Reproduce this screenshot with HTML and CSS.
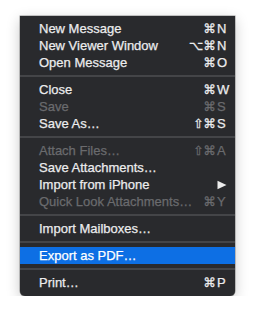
FILE: index.html
```html
<!DOCTYPE html>
<html>
<head>
<meta charset="utf-8">
<link rel="stylesheet" href="styles.css">
</head>
<body>
<div class="menu">
  <div class="item"><span class="label">New Message</span><span class="mods">⌘</span><span class="key">N</span></div>
  <div class="item"><span class="label">New Viewer Window</span><span class="mods">⌥⌘</span><span class="key">N</span></div>
  <div class="item"><span class="label">Open Message</span><span class="mods">⌘</span><span class="key">O</span></div>
  <div class="sep"></div>
  <div class="item"><span class="label">Close</span><span class="mods">⌘</span><span class="key">W</span></div>
  <div class="item disabled"><span class="label">Save</span><span class="mods">⌘</span><span class="key">S</span></div>
  <div class="item"><span class="label">Save As…</span><span class="mods">⇧⌘</span><span class="key">S</span></div>
  <div class="sep"></div>
  <div class="item disabled"><span class="label">Attach Files…</span><span class="mods">⇧⌘</span><span class="key">A</span></div>
  <div class="item"><span class="label">Save Attachments…</span><span class="mods"></span><span class="key"></span></div>
  <div class="item"><span class="label">Import from iPhone</span><span class="mods"></span><span class="key"><svg class="arrow" width="10" height="10" viewBox="0 0 10 10"><path d="M0.5 0.8 L9.5 5 L0.5 9.2 Z" fill="#ececec"/></svg></span></div>
  <div class="item disabled"><span class="label">Quick Look Attachments…</span><span class="mods">⌘</span><span class="key">Y</span></div>
  <div class="sep"></div>
  <div class="item"><span class="label">Import Mailboxes…</span><span class="mods"></span><span class="key"></span></div>
  <div class="sep"></div>
  <div class="item selected"><span class="label">Export as PDF…</span><span class="mods"></span><span class="key"></span></div>
  <div class="sep"></div>
  <div class="item"><span class="label">Print…</span><span class="mods">⌘</span><span class="key">P</span></div>
</div>
</body>
</html>
```
FILE: styles.css
```css
html, body {
  margin: 0;
  padding: 0;
  background: #ffffff;
}
body {
  padding: 16px 0 0 20px;
  font-family: "Liberation Sans", Arial, sans-serif;
}
.menu {
  width: 215px;
  height: 280px;
  box-sizing: border-box;
  padding: 4px 0 5px 0;
  background: #292a2d;
  border-radius: 0 0 5px 5px;
  box-shadow: 0 4px 14px rgba(0, 0, 0, 0.22), 0 0 0 0.5px rgba(0,0,0,0.4);
}
.item {
  display: flex;
  align-items: center;
  height: 17px;
  padding: 0 5px 0 19px;
  font-size: 13px;
  color: #ececed;
  -webkit-text-stroke: 0.25px currentColor;
}
.item.disabled {
  color: #6a6b6e;
}
.item.selected {
  background: #0d6fe4;
  color: #ffffff;
}
.label {
  flex: 1;
  white-space: nowrap;
}
.mods {
  text-align: right;
  font-family: "DejaVu Sans", sans-serif;
  font-size: 12.5px;
}
.key {
  width: 13px;
  margin-left: 1px;
  display: flex;
  align-items: center;
}
.sep {
  height: 10px;
  display: flex;
  align-items: center;
}
.sep::before {
  content: "";
  display: block;
  width: 100%;
  height: 2px;
  background: #444548;
}
```
